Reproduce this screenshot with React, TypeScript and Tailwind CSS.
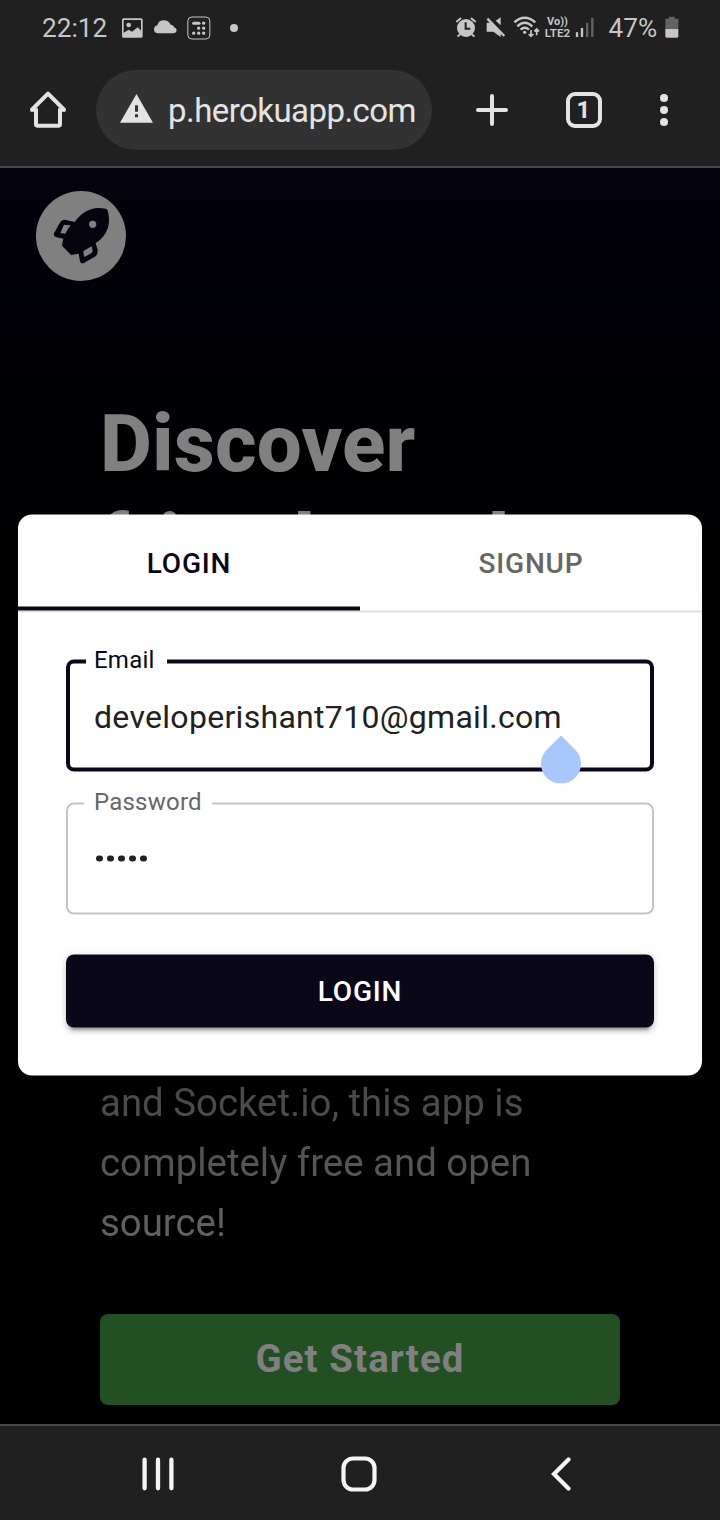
import type { ReactNode } from "react";

function Icon({ box, className, children }: { box: string; className: string; children: ReactNode }) {
  return (
    <svg viewBox={box} className={"block shrink-0 " + className} fill="none" aria-hidden="true">
      {children}
    </svg>
  );
}

function StatusBar() {
  return (
    <div className="flex h-14 shrink-0 items-center pb-px pl-[42px] pr-[41.5px] text-[26.200px] leading-none text-[#c6c6c6]">
      <span className="w-[65px] whitespace-nowrap pt-px">22:12</span>
      <Icon box="0 0 66 66" className="ml-[14px] h-[22px] w-[22px]">
        <rect x="5.500" y="6.500" width="57" height="53" rx="2" stroke="#c6c6c6" strokeWidth="5" />
        <circle cx="23" cy="24" r="7" fill="#c6c6c6" />
        <path d="M7 58V48L23 38L33 44L50 31L62 43V58Z" fill="#c6c6c6" />
      </Icon>
      <Icon box="462 47 69 69" className="ml-[11px] h-[23px] w-[23px]">
        <path d="M475 99Q462 99 462 87Q463 77 472 75Q476 60 491 60Q506 60 512 73Q521 73 522 81Q530 83 530 90Q529 99 519 99Z" fill="#c6c6c6" />
      </Icon>
      <Icon box="560 46 72 72" className="ml-[9.500px] h-6 w-6">
        <rect x="562.500" y="49" width="66" height="66" rx="12" stroke="#c6c6c6" strokeWidth="3" />
        <path d="M580 67.500H596" stroke="#c6c6c6" strokeWidth="9" strokeLinecap="round" />
        <path d="M610 67.500h.1M595 82.500h.1M610 82.500h.1M580 97.500h.1M595 97.500h.1M610 97.500h.1" stroke="#c6c6c6" strokeWidth="10" strokeLinecap="round" />
      </Icon>
      <span className="ml-[19px] h-2 w-2 rounded-full bg-[#c6c6c6]" />

      <div className="ml-auto flex items-center">
        <Icon box="75 48 66 66" className="h-[22px] w-[22px]">
          <circle cx="108" cy="84" r="27" fill="#c6c6c6" />
          <path d="M79 66L93 54M123 54L137 66M90 103L83 110M126 103L133 110" stroke="#c6c6c6" strokeWidth="6" />
          <path d="M107 67V86H121" stroke="#202020" strokeWidth="6" />
        </Icon>
        <Icon box="168 48 60 66" className="ml-[9px] h-[22px] w-5">
          <path d="M170 68H186L212 94V111L190 95H170Z" fill="#c6c6c6" />
          <path d="M212 52V76L197 62Z" fill="#c6c6c6" />
          <path d="M175 54L225 106" stroke="#202020" strokeWidth="5" />
          <path d="M172 56L223 108" stroke="#c6c6c6" strokeWidth="7" />
        </Icon>
        <Icon box="250 48 81 66" className="ml-[7px] h-[22px] w-[27px]">
          <path d="M254 67Q285 39 317 67M263 79Q285 57 308 79M273 89Q285 77 298 89" stroke="#c6c6c6" strokeWidth="7" />
          <circle cx="285" cy="97" r="5" fill="#c6c6c6" />
          <path d="M304 90V108M297 102L304 109L311 102M321 106V88M314 94L321 87L328 94" stroke="#c6c6c6" strokeWidth="5" />
        </Icon>
        <div className="ml-[4px] flex w-[27px] flex-col items-center pt-px text-[11px] font-bold leading-[11.500px]">
          <span className="whitespace-nowrap">Vo))</span>
          <span className="whitespace-nowrap text-[11.700px] font-semibold">LTE2</span>
        </div>
        <Icon box="435 48 60 66" className="ml-[3.500px] h-[22px] w-5">
          <path d="M441 97V111M456 84V111" stroke="#c6c6c6" strokeWidth="7" />
          <path d="M471.500 68V111M487 53V111" stroke="#636363" strokeWidth="7" />
        </Icon>
        <span className="ml-[14px] w-[49px] whitespace-nowrap pt-px">47%</span>
        <Icon box="704 48 42 66" className="ml-[7px] h-[22px] w-[14px]">
          <path d="M716 50H733V56H744V88H705V56H716Z" fill="#636363" />
          <path d="M705 87H744V109Q744 113 740 113H709Q705 113 705 109Z" fill="#c6c6c6" />
        </Icon>
      </div>
    </div>
  );
}

function BrowserBar() {
  return (
    <div className="flex h-28 shrink-0 items-center border-b-2 border-[#474747] pb-[2px] text-[#e3e3e3]">
      <Icon box="90 94 108 112" className="ml-[30px] h-[37.330px] w-9">
        <path d="M94 152L144 102L194 152" stroke="#e3e3e3" strokeWidth="12" strokeLinecap="butt" strokeLinejoin="round" />
        <path d="M90 150L94 146L106 146V156H93Q90 154 90 150ZM198 150L194 146L182 146V156H195Q198 154 198 150Z" fill="#e3e3e3" />
        <path d="M108 146V194Q108 198 112 198H176Q180 198 180 194V146" stroke="#e3e3e3" strokeWidth="12" />
      </Icon>
      <div className="ml-[30px] flex h-20 w-[336px] items-center rounded-full bg-[#323232] pl-6">
        <Icon box="360 103 99 86" className="-mt-[2.500px] h-[28.670px] w-[33px]">
          <path fillRule="evenodd" d="M409.500 103L459 189H360ZM405 137V156H414V137ZM405 164V173H414V164Z" fill="#e3e3e3" />
        </Icon>
        <span className="ml-[15px] mt-[2px] whitespace-nowrap text-[33px] leading-10 tracking-[-0.550px]">p.herokuapp.com</span>
      </div>
      <Icon box="108 102 96 96" className="ml-11 h-8 w-8">
        <path d="M114 150H198M156 108V192" stroke="#e3e3e3" strokeWidth="12" strokeLinecap="round" />
      </Icon>
      <div className="ml-[58px] flex h-9 w-9 items-center justify-center rounded-[9px] border-4 border-[#e3e3e3] text-[24px] font-bold leading-none">
        <span className="-ml-px">1</span>
      </div>
      <div className="ml-[58px] flex flex-col gap-1">
        <span className="h-2 w-2 rounded-full bg-[#e3e3e3]" />
        <span className="h-2 w-2 rounded-full bg-[#e3e3e3]" />
        <span className="h-2 w-2 rounded-full bg-[#e3e3e3]" />
      </div>
    </div>
  );
}

function Landing() {
  return (
    <div className="flex h-full flex-col bg-linear-to-b from-[#03020e] via-black via-60% to-black">
      <div className="px-9 pt-[23px]">
        <Icon box="108 393 270 270" className="h-[90px] w-[90px] rounded-full bg-[#808080]">
          <path
            fillRule="evenodd"
            fill="#04030e"
            d="M224 486C242 460 268 444 295 444Q318 444 322 449Q327 462 327 485C325 512 312 533 287 549L293 570Q294 584 285 590L253 608Q243 614 240 604L236 581L213 585L186 557L190 536L167 531Q160 528 162 520L178 491Q184 479 194 479ZM181 519L192 494L212 496L203 508L196 521ZM250 573L275 559L278 573L274 580L252 591ZM267 493A11 11 0 1 0 289 493A11 11 0 1 0 267 493Z"
          />
        </Icon>
      </div>
      <div className="flex flex-col px-[100px] pt-[113px]">
        <h1 className="h-[500px] text-[80px] font-extrabold leading-[100px] tracking-[0.150px] text-[#808080]">
          Discover
          <br />
          friends and
        </h1>
        <p className="mt-[11px] bg-linear-to-b from-[#2a2a2a] to-[#656565] bg-clip-text pt-[168px] text-[38.400px] leading-[60px] text-transparent">
          and Socket.io, this app is completely free and open source!
        </p>
        <button className="mt-[61px] h-[91px] rounded-lg bg-[#225023] pb-px text-[38.400px] font-bold tracking-[1.100px] text-[#808080]">
          Get Started
        </button>
      </div>
    </div>
  );
}

function LoginDialog() {
  return (
    <div className="absolute left-[18px] top-[347px] flex h-[561px] w-[684px] -translate-y-[0.5px] flex-col rounded-[14px] bg-white">
      <div className="flex h-[98px] shrink-0 border-b-2 border-[#e0e0e0] text-[28px] font-medium tracking-[0.8px]">
        <div className="flex flex-1 items-center justify-center border-b-4 border-[#0a0818] pt-[5px] text-[#0a0818]">LOGIN</div>
        <div className="flex flex-1 items-center justify-center pt-px text-[#666666]">SIGNUP</div>
      </div>
      <div className="flex flex-col px-12 pt-[47px]">
        <div className="relative flex h-28 items-center rounded-lg border-4 border-[#0a0818] pl-6 text-[32px] tracking-[0.3px] text-[#212121]">
          <span className="absolute -top-[20px] left-4 w-[81px] bg-white pl-2 text-[24px] leading-8 tracking-[0.220px] text-[#0a0818]">Email</span>
          <span className="mt-[2px]">developerishant710@gmail.com</span>
          <Icon box="0 0 40 48" className="absolute left-[471px] top-[72px] h-12 w-10">
            <path d="M20 0L34.500 14.500A20 20 0 1 1 5.500 14.500Z" fill="#a8c7fa" />
          </Icon>
        </div>
        <div className="relative mt-[31px] flex h-28 items-center rounded-lg border-2 border-[#c4c4c4] pl-[28px]">
          <span className="absolute -top-[19px] left-4 w-32 bg-white pl-2.5 text-[24px] leading-8 tracking-[0.220px] text-[#666666]">Password</span>
          <div className="flex gap-[4.600px]">
            <span className="h-[6.500px] w-[6.500px] rounded-full bg-[#212121]" />
            <span className="h-[6.500px] w-[6.500px] rounded-full bg-[#212121]" />
            <span className="h-[6.500px] w-[6.500px] rounded-full bg-[#212121]" />
            <span className="h-[6.500px] w-[6.500px] rounded-full bg-[#212121]" />
            <span className="h-[6.500px] w-[6.500px] rounded-full bg-[#212121]" />
          </div>
        </div>
        <button className="mt-10 h-[73px] rounded-lg bg-[#0a0818] text-[28px] font-medium tracking-[0.8px] text-white shadow-[0_6px_2px_-4px_rgba(0,0,0,0.2),0_4px_4px_0_rgba(0,0,0,0.14),0_2px_10px_0_rgba(0,0,0,0.12)]">
          LOGIN
        </button>
      </div>
    </div>
  );
}

function NavigationBar() {
  return (
    <div className="flex h-24 shrink-0 items-center border-t-2 border-[#474747] pt-[2px]">
      <Icon box="0 0 32 34" className="ml-[142px] h-[34px] w-8">
        <path d="M2.600 2.700V31.300M16 2.700V31.300M29.400 2.700V31.300" stroke="#f5f5f5" strokeWidth="4.300" strokeLinecap="round" />
      </Icon>
      <Icon box="0 0 36 36" className="ml-[167px] h-9 w-9">
        <rect x="2.500" y="2.500" width="31" height="31" rx="9.500" stroke="#f5f5f5" strokeWidth="4.200" />
      </Icon>
      <Icon box="0 0 20 34" className="ml-[173.500px] h-[34px] w-5">
        <path d="M17.500 2.500L3 17L17.500 31.500" stroke="#f5f5f5" strokeWidth="4.200" strokeLinecap="round" />
      </Icon>
    </div>
  );
}

export default function App() {
  return (
    <div className="flex h-[1520px] w-[720px] flex-col overflow-hidden bg-[#202020] font-['Roboto',sans-serif]">
      <StatusBar />
      <BrowserBar />
      <main className="relative h-[1256px] shrink-0 overflow-hidden">
        <Landing />
        <LoginDialog />
      </main>
      <NavigationBar />
    </div>
  );
}
